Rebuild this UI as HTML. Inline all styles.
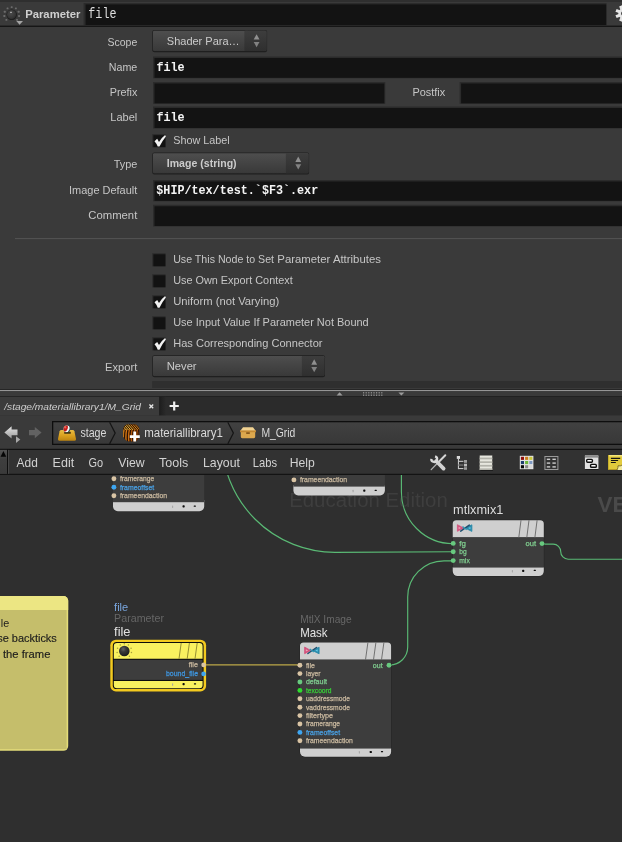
<!DOCTYPE html>
<html><head><meta charset="utf-8"><title>Houdini</title>
<style>
html,body{margin:0;padding:0;background:#3a3a3a;overflow:hidden;width:622px;height:842px}
svg{display:block;position:absolute;left:0;top:0;will-change:transform}
text{font-family:"Liberation Sans",sans-serif;white-space:pre}
.m{font-family:"Liberation Mono",monospace}
.mb{font-family:"Liberation Mono",monospace;font-weight:bold}
</style></head><body>
<svg width="622" height="842" viewBox="0 0 622 842">
<defs>
<linearGradient id="btn" x1="0" y1="0" x2="0" y2="1"><stop offset="0" stop-color="#4e4e4e"/><stop offset="1" stop-color="#393939"/></linearGradient>
<linearGradient id="btn2" x1="0" y1="0" x2="0" y2="1"><stop offset="0" stop-color="#3d3d3d"/><stop offset="1" stop-color="#2f2f2f"/></linearGradient>
<linearGradient id="pbox" x1="0" y1="0" x2="0" y2="1"><stop offset="0" stop-color="#414141"/><stop offset="1" stop-color="#383838"/></linearGradient>
<linearGradient id="strip" x1="0" y1="0" x2="0" y2="1"><stop offset="0" stop-color="#545454"/><stop offset="0.4" stop-color="#3e3e3e"/><stop offset="1" stop-color="#3a3a3a"/></linearGradient>
<linearGradient id="arr" x1="0" y1="0" x2="0" y2="1"><stop offset="0" stop-color="#e6e6e6"/><stop offset="1" stop-color="#9c9c9c"/></linearGradient>
<radialGradient id="knob" cx="0.42" cy="0.38" r="0.7"><stop offset="0" stop-color="#4a4a4a"/><stop offset="0.7" stop-color="#363636"/><stop offset="1" stop-color="#262626"/></radialGradient>
<radialGradient id="knob2" cx="0.4" cy="0.32" r="0.75"><stop offset="0" stop-color="#666"/><stop offset="0.35" stop-color="#3a3a3a"/><stop offset="1" stop-color="#181818"/></radialGradient>
<g id="mtlx">
<path d="M0.3 0.8 L0.3 7.4 L6.4 4.1 Z" fill="#d2527c" stroke="#d2527c" stroke-width="0.8" stroke-linejoin="round"/>
<path d="M1.5 2.9 L1.5 5.3 L3.9 4.1 Z" fill="#eea0b8"/>
<path d="M14.8 0.9 L14.8 7.5 L8 4.2 Z" fill="#2a8aaa" stroke="#2a8aaa" stroke-width="0.8" stroke-linejoin="round"/>
<path d="M13.4 3 L13.4 5.4 L11 4.2 Z" fill="#62c8e6"/>
<path d="M3.6 7.2 L12.2 1.2" stroke="#1f5070" stroke-width="1.5" stroke-linecap="round" fill="none"/>
<path d="M5.4 2.6 L9.6 5.8" stroke="#2f96b4" stroke-width="1.2" fill="none"/>
</g>
</defs>

<rect x="0" y="0" width="622" height="842" fill="#3a3a3a"/>
<rect x="0" y="0" width="622" height="2" fill="#2f2f2f"/>
<g>
<rect x="5.45" y="18.95" width="1.9" height="1.9" rx="0.5" fill="#6c6c6c"/>
<rect x="3.39" y="15.11" width="1.9" height="1.9" rx="0.5" fill="#6c6c6c"/>
<rect x="3.82" y="10.78" width="1.9" height="1.9" rx="0.5" fill="#6c6c6c"/>
<rect x="6.58" y="7.41" width="1.9" height="1.9" rx="0.5" fill="#6c6c6c"/>
<rect x="10.75" y="6.15" width="1.9" height="1.9" rx="0.5" fill="#6c6c6c"/>
<rect x="14.92" y="7.41" width="1.9" height="1.9" rx="0.5" fill="#6c6c6c"/>
<rect x="17.68" y="10.78" width="1.9" height="1.9" rx="0.5" fill="#6c6c6c"/>
<rect x="18.11" y="15.11" width="1.9" height="1.9" rx="0.5" fill="#6c6c6c"/>
<rect x="16.05" y="18.95" width="1.9" height="1.9" rx="0.5" fill="#6c6c6c"/>
<circle cx="11.7" cy="14.7" r="5.2" fill="#1c1c1c"/><circle cx="11.6" cy="14.6" r="4.6" fill="url(#knob)"/>
<rect x="10.1" y="11.8" width="1.8" height="1" rx="0.4" fill="#d8d8d8"/>
<path d="M16.3 21 H23 L19.6 24.8 Z" fill="#a4a4a4"/>
</g>
<text x="25.2" y="18" font-size="11" fill="#cfcfcf" textLength="55.2" lengthAdjust="spacingAndGlyphs" font-weight="bold">Parameter</text>
<rect x="83.6" y="3" width="523" height="22.3" fill="#2b2b2b"/>
<rect x="85.6" y="4.4" width="520.6" height="20.6" fill="#131313"/>
<text x="88.3" y="17.7" font-size="14" fill="#dedede" class="m" textLength="28.2" lengthAdjust="spacingAndGlyphs">file</text>
<g transform="translate(623.7,13.5)" fill="#e6e6e6">
<rect x="-1.5" y="-8.3" width="3" height="5" transform="rotate(22.5)"/>
<rect x="-1.5" y="-8.3" width="3" height="5" transform="rotate(67.5)"/>
<rect x="-1.5" y="-8.3" width="3" height="5" transform="rotate(112.5)"/>
<rect x="-1.5" y="-8.3" width="3" height="5" transform="rotate(157.5)"/>
<rect x="-1.5" y="-8.3" width="3" height="5" transform="rotate(202.5)"/>
<rect x="-1.5" y="-8.3" width="3" height="5" transform="rotate(247.5)"/>
<rect x="-1.5" y="-8.3" width="3" height="5" transform="rotate(292.5)"/>
<rect x="-1.5" y="-8.3" width="3" height="5" transform="rotate(337.5)"/>
<circle r="4.0" fill="none" stroke="#e6e6e6" stroke-width="2.8"/>
</g>
<rect x="0" y="25.6" width="622" height="1.4" fill="#161616"/>
<text x="137.3" y="46" font-size="10.8" fill="#c6c6c6" textLength="29.8" lengthAdjust="spacingAndGlyphs" text-anchor="end">Scope</text>
<rect x="152.3" y="30.1" width="114.80000000000001" height="22.099999999999998" fill="#1f1f1f" rx="2"/>
<rect x="153" y="30.8" width="113.4" height="20.2" fill="url(#btn)" rx="1.2"/>
<rect x="244.6" y="30.8" width="21.799999999999983" height="20.2" fill="url(#btn2)" rx="1.2"/>
<rect x="244.6" y="30.8" width="3" height="20.2" fill="url(#btn2)"/>
<path d="M253.70 39.60 L256.60 34.20 L259.50 39.60 Z" fill="#909090"/>
<path d="M253.70 41.90 L256.60 47.20 L259.50 41.90 Z" fill="#828282"/>
<text x="166.8" y="44.699999999999996" font-size="10.8" fill="#cbcbcb" textLength="72.8" lengthAdjust="spacingAndGlyphs">Shader Para…</text>
<text x="137.3" y="71" font-size="10.8" fill="#c6c6c6" textLength="28.5" lengthAdjust="spacingAndGlyphs" text-anchor="end">Name</text>
<rect x="153" y="56.5" width="469" height="21.799999999999997" fill="#2b2b2b"/>
<rect x="154.5" y="58.0" width="467.5" height="19.799999999999997" fill="#131313"/>
<text x="156.4" y="70.7" font-size="12.5" fill="#f4f4f4" class="mb" textLength="28.16" lengthAdjust="spacingAndGlyphs">file</text>
<text x="137.3" y="96" font-size="10.8" fill="#c6c6c6" textLength="27.6" lengthAdjust="spacingAndGlyphs" text-anchor="end">Prefix</text>
<rect x="153" y="82" width="232.3" height="21.799999999999997" fill="#2b2b2b"/>
<rect x="154.5" y="83.5" width="229.8" height="19.799999999999997" fill="#131313"/>
<text x="412.4" y="96" font-size="10.8" fill="#c6c6c6" textLength="32.8" lengthAdjust="spacingAndGlyphs">Postfix</text>
<rect x="459.6" y="82" width="162.39999999999998" height="21.799999999999997" fill="#2b2b2b"/>
<rect x="461.1" y="83.5" width="160.89999999999998" height="19.799999999999997" fill="#131313"/>
<text x="137.3" y="121" font-size="10.8" fill="#c6c6c6" textLength="27" lengthAdjust="spacingAndGlyphs" text-anchor="end">Label</text>
<rect x="153" y="106.5" width="469" height="22.0" fill="#2b2b2b"/>
<rect x="154.5" y="108.0" width="467.5" height="20.0" fill="#131313"/>
<text x="156.4" y="120.9" font-size="12.5" fill="#f4f4f4" class="mb" textLength="28.16" lengthAdjust="spacingAndGlyphs">file</text>
<rect x="152.2" y="134.1" width="13.4" height="13.2" fill="#2c2c2c"/>
<rect x="153.39999999999998" y="135.2" width="12.0" height="11.9" fill="#121212"/>
<path transform="translate(152.5,134.0)" d="M2.0 7.2 L4.7 4.8 L6.5 7.9 Q9.2 3.4 12.6 0.9 L13.4 2.5 Q9.8 6.8 7.0 12.6 L5.2 12.6 Q4.2 9.6 2.0 7.2 Z" fill="#f2f2f2"/>
<text x="173.2" y="144" font-size="10.8" fill="#c6c6c6" textLength="56.5" lengthAdjust="spacingAndGlyphs">Show Label</text>
<text x="137.3" y="168" font-size="10.8" fill="#c6c6c6" textLength="23.6" lengthAdjust="spacingAndGlyphs" text-anchor="end">Type</text>
<rect x="152.3" y="152.5" width="156.8" height="21.9" fill="#1f1f1f" rx="2"/>
<rect x="153" y="153.2" width="155.4" height="20" fill="url(#btn)" rx="1.2"/>
<rect x="285.9" y="153.2" width="22.5" height="20" fill="url(#btn2)" rx="1.2"/>
<rect x="285.9" y="153.2" width="3" height="20" fill="url(#btn2)"/>
<path d="M295.35 161.90 L298.25 156.50 L301.15 161.90 Z" fill="#909090"/>
<path d="M295.35 164.20 L298.25 169.50 L301.15 164.20 Z" fill="#828282"/>
<text x="166.8" y="167.0" font-size="10.8" fill="#cbcbcb" textLength="69.8" lengthAdjust="spacingAndGlyphs" font-weight="bold">Image (string)</text>
<text x="137.3" y="194" font-size="10.8" fill="#c6c6c6" textLength="68.3" lengthAdjust="spacingAndGlyphs" text-anchor="end">Image Default</text>
<rect x="153" y="180" width="469" height="21.30000000000001" fill="#2b2b2b"/>
<rect x="154.5" y="181.5" width="467.5" height="19.30000000000001" fill="#131313"/>
<text x="156.3" y="194.1" font-size="12.5" fill="#f4f4f4" class="mb" textLength="161.9" lengthAdjust="spacingAndGlyphs">$HIP/tex/test.`$F3`.exr</text>
<text x="137.3" y="219" font-size="10.8" fill="#c6c6c6" textLength="49" lengthAdjust="spacingAndGlyphs" text-anchor="end">Comment</text>
<rect x="153" y="204.8" width="469" height="21.69999999999999" fill="#2b2b2b"/>
<rect x="154.5" y="206.3" width="467.5" height="19.69999999999999" fill="#131313"/>
<rect x="15" y="238.1" width="607" height="1" fill="#555555"/>
<rect x="152.2" y="253.2" width="13.4" height="13.2" fill="#2c2c2c"/>
<rect x="153.39999999999998" y="254.29999999999998" width="12.0" height="11.9" fill="#121212"/>
<text x="173.2" y="263.0" font-size="10.8" fill="#c6c6c6" textLength="100.9" lengthAdjust="spacingAndGlyphs">Use This Node to Set</text>
<text x="277.3" y="263.0" font-size="10.8" fill="#c6c6c6" textLength="103.6" lengthAdjust="spacingAndGlyphs">Parameter Attributes</text>
<rect x="152.2" y="274.2" width="13.4" height="13.2" fill="#2c2c2c"/>
<rect x="153.39999999999998" y="275.3" width="12.0" height="11.9" fill="#121212"/>
<text x="173.2" y="284.0" font-size="10.8" fill="#c6c6c6" textLength="119.5" lengthAdjust="spacingAndGlyphs">Use Own Export Context</text>
<rect x="152.2" y="295.2" width="13.4" height="13.2" fill="#2c2c2c"/>
<rect x="153.39999999999998" y="296.3" width="12.0" height="11.9" fill="#121212"/>
<path transform="translate(152.5,295.09999999999997)" d="M2.0 7.2 L4.7 4.8 L6.5 7.9 Q9.2 3.4 12.6 0.9 L13.4 2.5 Q9.8 6.8 7.0 12.6 L5.2 12.6 Q4.2 9.6 2.0 7.2 Z" fill="#f2f2f2"/>
<text x="173.2" y="305.0" font-size="10.8" fill="#c6c6c6" textLength="106" lengthAdjust="spacingAndGlyphs">Uniform (not Varying)</text>
<rect x="152.2" y="316.2" width="13.4" height="13.2" fill="#2c2c2c"/>
<rect x="153.39999999999998" y="317.3" width="12.0" height="11.9" fill="#121212"/>
<text x="173.2" y="326.0" font-size="10.8" fill="#c6c6c6" textLength="195.5" lengthAdjust="spacingAndGlyphs">Use Input Value If Parameter Not Bound</text>
<rect x="152.2" y="337.2" width="13.4" height="13.2" fill="#2c2c2c"/>
<rect x="153.39999999999998" y="338.3" width="12.0" height="11.9" fill="#121212"/>
<path transform="translate(152.5,337.09999999999997)" d="M2.0 7.2 L4.7 4.8 L6.5 7.9 Q9.2 3.4 12.6 0.9 L13.4 2.5 Q9.8 6.8 7.0 12.6 L5.2 12.6 Q4.2 9.6 2.0 7.2 Z" fill="#f2f2f2"/>
<text x="173.2" y="347.0" font-size="10.8" fill="#c6c6c6" textLength="149.3" lengthAdjust="spacingAndGlyphs">Has Corresponding Connector</text>
<text x="137.3" y="371.2" font-size="10.8" fill="#c6c6c6" textLength="32.2" lengthAdjust="spacingAndGlyphs" text-anchor="end">Export</text>
<rect x="152.3" y="355.3" width="172.70000000000002" height="21.9" fill="#1f1f1f" rx="2"/>
<rect x="153" y="356" width="171.3" height="20" fill="url(#btn)" rx="1.2"/>
<rect x="301.9" y="356" width="22.400000000000034" height="20" fill="url(#btn2)" rx="1.2"/>
<rect x="301.9" y="356" width="3" height="20" fill="url(#btn2)"/>
<path d="M311.30 364.70 L314.20 359.30 L317.10 364.70 Z" fill="#909090"/>
<path d="M311.30 367.00 L314.20 372.30 L317.10 367.00 Z" fill="#828282"/>
<text x="166.8" y="369.8" font-size="10.8" fill="#cbcbcb" textLength="29.8" lengthAdjust="spacingAndGlyphs">Never</text>
<rect x="152.2" y="381.1" width="470" height="6.9" fill="#2f2f2f"/>
<rect x="0" y="389" width="622" height="1" fill="#262626"/>
<rect x="0" y="390" width="622" height="1.2" fill="#959595"/>
<rect x="0" y="391.2" width="622" height="5.3" fill="#3a3a3a"/>
<path d="M336.6 395.5 L339.6 392.3 L342.6 395.5 Z M398.4 392.4 L404.4 392.4 L401.4 395.6 Z" fill="#9a9a9a"/>
<rect x="363.0" y="392.2" width="1.2" height="1.2" fill="#9a9a9a"/>
<rect x="365.6" y="392.2" width="1.2" height="1.2" fill="#9a9a9a"/>
<rect x="368.2" y="392.2" width="1.2" height="1.2" fill="#9a9a9a"/>
<rect x="370.8" y="392.2" width="1.2" height="1.2" fill="#9a9a9a"/>
<rect x="373.4" y="392.2" width="1.2" height="1.2" fill="#9a9a9a"/>
<rect x="376.0" y="392.2" width="1.2" height="1.2" fill="#9a9a9a"/>
<rect x="378.6" y="392.2" width="1.2" height="1.2" fill="#9a9a9a"/>
<rect x="381.2" y="392.2" width="1.2" height="1.2" fill="#9a9a9a"/>
<rect x="363.0" y="394.59999999999997" width="1.2" height="1.2" fill="#9a9a9a"/>
<rect x="365.6" y="394.59999999999997" width="1.2" height="1.2" fill="#9a9a9a"/>
<rect x="368.2" y="394.59999999999997" width="1.2" height="1.2" fill="#9a9a9a"/>
<rect x="370.8" y="394.59999999999997" width="1.2" height="1.2" fill="#9a9a9a"/>
<rect x="373.4" y="394.59999999999997" width="1.2" height="1.2" fill="#9a9a9a"/>
<rect x="376.0" y="394.59999999999997" width="1.2" height="1.2" fill="#9a9a9a"/>
<rect x="378.6" y="394.59999999999997" width="1.2" height="1.2" fill="#9a9a9a"/>
<rect x="381.2" y="394.59999999999997" width="1.2" height="1.2" fill="#9a9a9a"/>
<rect x="0" y="396.3" width="622" height="0.9" fill="#161616"/>
<rect x="0" y="396.8" width="622" height="18.9" fill="#2b2b2b"/>
<linearGradient id="tsh" x1="0" y1="0" x2="1" y2="0"><stop offset="0" stop-color="#1c1c1c"/><stop offset="1" stop-color="#2b2b2b"/></linearGradient>
<rect x="159" y="396.8" width="7" height="18.8" fill="url(#tsh)"/>
<rect x="0" y="396.8" width="159.1" height="18.8" fill="#3b3b3b"/>
<text x="4.2" y="410" font-size="9.6" fill="#cfcfcf" textLength="136.8" lengthAdjust="spacingAndGlyphs" font-style="italic">/stage/materiallibrary1/M_Grid</text>
<path d="M149.4 404.5 L153.2 408.3 M153.2 404.5 L149.4 408.3" stroke="#e4e4e4" stroke-width="1.35"/>
<path d="M169.6 406 H178.8 M174.2 401.4 V410.6" stroke="#f0f0f0" stroke-width="2.2"/>
<rect x="0" y="415.6" width="622" height="33" fill="#3a3a3a"/>
<path d="M4.4 432.5 L11.6 426.2 V429.5 H17.5 V435.3 H11.6 V438.6 Z" fill="url(#arr)"/>
<path d="M16 436.2 L20.3 439.6 L16 443 Z" fill="#a8a8a8"/>
<path d="M41.6 432.6 L34.8 426.9 V430 H29 V435.2 H34.8 V438.3 Z" fill="#626262"/>
<rect x="52" y="421" width="572" height="24" fill="#0e0e0e"/>
<rect x="53.3" y="422.3" width="571" height="21.4" fill="url(#pbox)"/>
<path d="M109.6 422.3 L115.19999999999999 433.1 L109.6 443.9" fill="none" stroke="#151515" stroke-width="1.2"/>
<path d="M227.8 422.3 L233.4 433.1 L227.8 443.9" fill="none" stroke="#151515" stroke-width="1.2"/>
<linearGradient id="tray" x1="0" y1="0" x2="0" y2="1"><stop offset="0" stop-color="#e8bc44"/><stop offset="0.5" stop-color="#dba220"/><stop offset="1" stop-color="#bc8410"/></linearGradient>
<clipPath id="ballc"><circle cx="66.9" cy="428.9" r="3.35"/></clipPath>
<g><path d="M61.4 430 H72.6 Q74 430 74.4 431.3 L76 439 Q76.3 440.8 74.6 440.8 H59.4 Q57.7 440.8 58 439 L59.6 431.3 Q60 430 61.4 430 Z" fill="url(#tray)"/><rect x="64.2" y="431.8" width="6.6" height="2" rx="0.6" fill="#46340c"/><g clip-path="url(#ballc)"><rect x="62" y="424" width="10" height="10" fill="#2a5656"/><ellipse cx="66.1" cy="428.6" rx="3.3" ry="3.9" fill="#f4f4f4" transform="rotate(20 66.1 428.6)"/><ellipse cx="65" cy="428.2" rx="2.7" ry="3.7" fill="#c81a1a" transform="rotate(20 65 428.2)"/><ellipse cx="65.2" cy="427.2" rx="1" ry="1.2" fill="#e86a5a"/></g></g>
<text x="80.4" y="436.8" font-size="12" fill="#dadada" textLength="26" lengthAdjust="spacingAndGlyphs">stage</text>
<clipPath id="mlc"><path d="M126.6 424.6 L135.4 424.4 Q138.8 425.6 139.2 428.6 L139 437.4 Q137.6 440.6 135 441.6 L127.4 441.2 Q124 439.6 123.2 436.6 L123.2 428.6 Q124 425.6 126.6 424.6 Z"/></clipPath>
<g clip-path="url(#mlc)">
<rect x="122" y="423" width="19" height="20" fill="#2c1204"/>
<path d="M123.6 442 Q122.8 435 124.19999999999999 428.6" stroke="#e08a1c" stroke-width="1.35" fill="none"/>
<path d="M126.2 442 Q125.4 435 126.8 428.6" stroke="#d87a14" stroke-width="1.35" fill="none"/>
<path d="M128.9 442 Q128.1 435 129.5 428.6" stroke="#cc6c10" stroke-width="1.35" fill="none"/>
<path d="M131.6 442 Q130.79999999999998 435 132.2 428.6" stroke="#b85c0c" stroke-width="1.35" fill="none"/>
<path d="M134.3 442 Q133.5 435 134.9 428.6" stroke="#b85c0c" stroke-width="1.35" fill="none"/>
<path d="M137.0 442 Q136.2 435 137.6 428.6" stroke="#a8500a" stroke-width="1.35" fill="none"/>
<path d="M139.4 442 Q138.6 435 140.0 428.6" stroke="#96460a" stroke-width="1.35" fill="none"/>
<rect x="122" y="423" width="19" height="6.4" fill="#341604"/>
<path d="M120.6 423.6 L126.2 430" stroke="#f0c040" stroke-width="0.95" fill="none"/>
<path d="M122.9 423.6 L128.5 430" stroke="#f0c040" stroke-width="0.95" fill="none"/>
<path d="M125.2 423.6 L130.8 430" stroke="#f0c040" stroke-width="0.95" fill="none"/>
<path d="M127.5 423.6 L133.1 430" stroke="#f0c040" stroke-width="0.95" fill="none"/>
<path d="M129.8 423.6 L135.4 430" stroke="#d88a20" stroke-width="0.95" fill="none"/>
<path d="M132.1 423.6 L137.7 430" stroke="#d88a20" stroke-width="0.95" fill="none"/>
<path d="M134.4 423.6 L140.0 430" stroke="#d88a20" stroke-width="0.95" fill="none"/>
<path d="M136.7 423.6 L142.3 430" stroke="#d88a20" stroke-width="0.95" fill="none"/>
<path d="M139.0 423.6 L144.6 430" stroke="#d88a20" stroke-width="0.95" fill="none"/>
</g>
<path d="M129.8 436.6 H139.8 M134.7 431.6 V441.6" stroke="#ffffff" stroke-width="2.7"/>
<text x="144.2" y="436.8" font-size="12" fill="#dadada" textLength="78.6" lengthAdjust="spacingAndGlyphs">materiallibrary1</text>
<g><path d="M240 431.2 L243 427.3 H253 L256 431.2 Z" fill="#f0d292"/><path d="M240.8 431.2 H255.2 V436.8 a1.4 1.4 0 0 1 -1.4 1.4 H242.2 a1.4 1.4 0 0 1 -1.4 -1.4 Z" fill="#dca84e"/><rect x="240" y="430.4" width="16" height="1.8" fill="#c48a34"/><rect x="246.2" y="432.2" width="3.6" height="1.8" fill="#8a5a1c"/></g>
<text x="261.4" y="436.8" font-size="12" fill="#dadada" textLength="34" lengthAdjust="spacingAndGlyphs">M_Grid</text>
<rect x="0" y="448.8" width="622" height="26.1" fill="#0e0e0e"/>
<rect x="0" y="449.9" width="622" height="23.9" fill="#323232"/>
<rect x="0" y="449.9" width="7.0" height="23.9" fill="url(#strip)"/>
<rect x="7.0" y="449.9" width="1.1" height="23.9" fill="#0e0e0e"/>
<rect x="8.1" y="449.9" width="1" height="23.9" fill="#4a4a4a"/>
<path d="M0.6 456.7 L3.4 451 L6.2 456.7 Z" fill="#050505"/>
<text x="16.6" y="466.6" font-size="12.4" fill="#d2d2d2" textLength="21.2" lengthAdjust="spacingAndGlyphs">Add</text>
<text x="52.6" y="466.6" font-size="12.4" fill="#d2d2d2" textLength="21.6" lengthAdjust="spacingAndGlyphs">Edit</text>
<text x="88.6" y="466.6" font-size="12.4" fill="#d2d2d2" textLength="14.6" lengthAdjust="spacingAndGlyphs">Go</text>
<text x="118.2" y="466.6" font-size="12.4" fill="#d2d2d2" textLength="26.4" lengthAdjust="spacingAndGlyphs">View</text>
<text x="159" y="466.6" font-size="12.4" fill="#d2d2d2" textLength="29.2" lengthAdjust="spacingAndGlyphs">Tools</text>
<text x="203" y="466.6" font-size="12.4" fill="#d2d2d2" textLength="37" lengthAdjust="spacingAndGlyphs">Layout</text>
<text x="252.8" y="466.6" font-size="12.4" fill="#d2d2d2" textLength="24.2" lengthAdjust="spacingAndGlyphs">Labs</text>
<text x="289.8" y="466.6" font-size="12.4" fill="#d2d2d2" textLength="25" lengthAdjust="spacingAndGlyphs">Help</text>
<g><path d="M445.3 455.3 L438.4 462.2" stroke="#d4d4d4" stroke-width="2" stroke-linecap="round"/><path d="M438.6 462 L431.2 469.6" stroke="#b4b4b4" stroke-width="1.3" stroke-linecap="round"/><path d="M436.2 461 L443.6 468.6" stroke="#d2d2d2" stroke-width="3.8" stroke-linecap="round"/><path d="M431.3 458.9 A2.9 2.9 0 1 0 435.1 456.3" fill="none" stroke="#dadada" stroke-width="2.3"/></g>
<g><rect x="456.8" y="456" width="3.2" height="2.9" fill="#dadada"/><rect x="457.9" y="458.9" width="1.1" height="10.2" fill="#c6c6c6"/><rect x="458" y="460.8" width="5.4" height="1.1" fill="#c6c6c6"/><rect x="458" y="464.5" width="5.4" height="1.1" fill="#808080"/><rect x="458" y="468" width="5.4" height="1.1" fill="#c6c6c6"/><rect x="464" y="460" width="3" height="2.8" fill="#9c9c9c"/><rect x="464" y="463.7" width="3" height="2.8" fill="#bcbcbc"/><rect x="464" y="467.2" width="3" height="2.6" fill="#9c9c9c"/></g>
<g><rect x="480.4" y="456.2" width="12.6" height="14.6" fill="#1c1c1c"/><rect x="479.7" y="455.5" width="12.6" height="14.5" fill="#e6e6de"/><rect x="479.7" y="457.6" width="12.6" height="1.7" fill="#b2b2aa"/><rect x="479.7" y="461.3" width="12.6" height="1.7" fill="#b2b2aa"/><rect x="479.7" y="464.9" width="12.6" height="1.7" fill="#b2b2aa"/><rect x="479.7" y="468.4" width="12.6" height="1.6" fill="#b2b2aa"/></g>
<g transform="translate(519.8,455.8)"><rect x="0" y="0" width="13.6" height="13.4" fill="#e4e4e4"/>
<rect x="1.1" y="1.0" width="3.1" height="3.1" fill="#90100e"/>
<rect x="5.300000000000001" y="1.0" width="3.1" height="3.1" fill="#cc7c1a"/>
<rect x="9.5" y="1.0" width="3.1" height="3.1" fill="#c8c63a"/>
<rect x="1.1" y="5.2" width="3.1" height="3.1" fill="#1e3e70"/>
<rect x="5.300000000000001" y="5.2" width="3.1" height="3.1" fill="#6ab63a"/>
<rect x="9.5" y="5.2" width="3.1" height="3.1" fill="#7c98c2"/>
<rect x="1.1" y="9.4" width="3.1" height="3.1" fill="#080808"/>
<rect x="5.300000000000001" y="9.4" width="3.1" height="3.1" fill="#888888"/>
<rect x="9.5" y="9.4" width="3.1" height="3.1" fill="#d8d8d8"/>
</g>
<g transform="translate(544.4,456)"><rect x="0.5" y="0.5" width="13" height="13" fill="#333" stroke="#9a9a9a" stroke-width="1"/><rect x="2.4" y="2.6" width="3.4" height="1.4" fill="#ccc"/><rect x="8" y="2.6" width="3.4" height="1.4" fill="#ccc"/><rect x="2.4" y="6.4" width="3.4" height="1.4" fill="#ccc"/><rect x="8" y="6.4" width="3.4" height="1.4" fill="#ccc"/><rect x="2.4" y="10.2" width="3.4" height="1.4" fill="#ccc"/><rect x="8" y="10.2" width="3.4" height="1.4" fill="#ccc"/></g>
<g><rect x="585.4" y="469" width="13" height="1" fill="#1e1e1e"/><rect x="584.9" y="455.7" width="13.5" height="13.3" fill="#e0e0e0"/><rect x="584.9" y="455.7" width="13.5" height="0.8" fill="#f6f6f6"/><rect x="584.9" y="456.5" width="13.5" height="0.8" fill="#2a2a2a"/><rect x="586.7" y="459.4" width="5.7" height="2.8" rx="0.9" fill="#fafafa" stroke="#0c0c0c" stroke-width="1.4"/><rect x="590.6" y="464.4" width="5.7" height="2.9" rx="0.9" fill="#fafafa" stroke="#0c0c0c" stroke-width="1.4"/></g>
<g><path d="M608 455 H623 V470 H608 Z" fill="#e2cb3c"/><path d="M608 455 H623 V456.4 H608 Z" fill="#f2e47a"/><path d="M608 455 V470 H609 V455 Z" fill="#c8b02c"/><path d="M608 469 H617 L618 470 H608 Z" fill="#b89c24"/><path d="M617 470 Q618.4 467.4 618 465.8 Q620 466.6 623 464.6 V470 Z" fill="#f3eba0"/><path d="M617 470 Q618.4 467.4 618 465.8 Q620 466.6 623 464.6" fill="none" stroke="#5a4c14" stroke-width="0.7"/><path d="M610.9 458.4 H620.2 M610.9 460.5 H618.1 M610.9 462.5 H615.8" stroke="#141414" stroke-width="1.1"/></g>
<rect x="0" y="474.9" width="622" height="368" fill="#2f2f2f"/>
<clipPath id="nc"><rect x="0" y="474.9" width="622" height="368"/></clipPath>
<g clip-path="url(#nc)">
<text x="289.2" y="506.6" font-size="20" fill="#3e3e3e" textLength="158.6" lengthAdjust="spacingAndGlyphs">Education Edition</text>
<text x="597.6" y="512.4" font-size="22.4" fill="#4a4a4a" font-weight="bold">VEX</text>
<path d="M222 439.4 A113 113 0 0 0 335 552.3 L453 551.7" fill="none" stroke="#5aba75" stroke-width="1.15"/>
<path d="M401.4 470 V491.9 A51.8 51.8 0 0 0 453.2 543.7" fill="none" stroke="#5aba75" stroke-width="1.15"/>
<path d="M389 665 H389.8 A17.9 17.9 0 0 0 407.7 647.1 V597.1 A36.3 36.3 0 0 1 444 560.8 H453" fill="none" stroke="#5aba75" stroke-width="1.15"/>
<path d="M542 544.1 H553.2 A7.5 7.5 0 0 1 560.7 551.6 A7.5 7.5 0 0 0 568.2 559.2 H622" fill="none" stroke="#5aba75" stroke-width="1.15"/>
<path d="M204 664.9 H300" fill="none" stroke="#bda848" stroke-width="1.2"/>
<path d="M113 500 H204.2 V506.4 a4.8 4.8 0 0 1 -4.8 4.8 H117.8 a4.8 4.8 0 0 1 -4.8 -4.8 Z" fill="#cfcfcf"/>
<rect x="113" y="474" width="91.2" height="28.2" fill="#3d3d3d"/>
<circle cx="113.9" cy="478.7" r="2.45" fill="#d9c4a4"/>
<text x="119.9" y="481.0" font-size="8.1" fill="#cdbca2" textLength="34.4" lengthAdjust="spacingAndGlyphs" stroke="#cdbca2" stroke-width="0.25">framerange</text>
<circle cx="113.9" cy="487.2" r="2.45" fill="#3ea6f2"/>
<text x="119.9" y="489.5" font-size="8.1" fill="#49a2e6" textLength="34.4" lengthAdjust="spacingAndGlyphs" stroke="#49a2e6" stroke-width="0.25">frameoffset</text>
<circle cx="113.9" cy="495.7" r="2.45" fill="#d9c4a4"/>
<text x="119.9" y="498.0" font-size="8.1" fill="#cdbca2" textLength="47.2" lengthAdjust="spacingAndGlyphs" stroke="#cdbca2" stroke-width="0.25">frameendaction</text>
<rect x="172.05" y="505.50" width="1.1" height="2.5" rx="0.4" fill="#a6a6a6"/>
<rect x="182.50" y="505.30" width="2.2" height="2.2" rx="0.7" fill="#0c0c0c"/>
<rect x="193.70" y="505.40" width="2.2" height="1.3" rx="0.5" fill="#0c0c0c"/>
<path d="M293.4 485 H384.9 V490.6 a4.8 4.8 0 0 1 -4.8 4.8 H298.2 a4.8 4.8 0 0 1 -4.8 -4.8 Z" fill="#cfcfcf"/>
<rect x="293.4" y="474" width="91.5" height="12.6" fill="#3d3d3d"/>
<circle cx="293.9" cy="479.9" r="2.45" fill="#d9c4a4"/>
<text x="299.9" y="482.2" font-size="8.1" fill="#cdbca2" textLength="47.2" lengthAdjust="spacingAndGlyphs" stroke="#cdbca2" stroke-width="0.25">frameendaction</text>
<rect x="352.55" y="489.80" width="1.1" height="2.5" rx="0.4" fill="#a6a6a6"/>
<rect x="363.20" y="489.60" width="2.2" height="2.2" rx="0.7" fill="#0c0c0c"/>
<rect x="374.60" y="489.70" width="2.2" height="1.3" rx="0.5" fill="#0c0c0c"/>
<text x="453" y="513.6" font-size="12.2" fill="#dcdcdc" textLength="50.4" lengthAdjust="spacingAndGlyphs">mtlxmix1</text>
<path d="M456.2 520.2 H540.3 a3.5 3.5 0 0 1 3.5 3.5 V571.1 a5 5 0 0 1 -5 5 H457.7 a5 5 0 0 1 -5 -5 V523.7 a3.5 3.5 0 0 1 3.5 -3.5 Z" fill="none" stroke="#242424" stroke-width="1"/>
<path d="M456.2 520.2 H540.3 a3.5 3.5 0 0 1 3.5 3.5 V537.4000000000001 H452.7 V523.7 a3.5 3.5 0 0 1 3.5 -3.5 Z" fill="#cfcfcf"/>
<path d="M452.7 567.2 H543.8 V571.1 a5 5 0 0 1 -5 5 H457.7 a5 5 0 0 1 -5 -5 Z" fill="#cfcfcf"/>
<rect x="452.7" y="537.2" width="91.1" height="30.199999999999953" fill="#3d3d3d"/>
<path d="M521 520.2 L518.8 537.4" stroke="#666666" stroke-width="0.9"/>
<path d="M529 520.2 L526.8 537.4" stroke="#666666" stroke-width="0.9"/>
<path d="M537.1 520.2 L534.9 537.4" stroke="#666666" stroke-width="0.9"/>
<use href="#mtlx" transform="translate(457.1,523.9)"/>
<circle cx="453.2" cy="543.4" r="2.45" fill="#68c97f"/>
<text x="459.2" y="545.6999999999999" font-size="8.1" fill="#80cf90" textLength="6.6" lengthAdjust="spacingAndGlyphs" stroke="#80cf90" stroke-width="0.25">fg</text>
<circle cx="453.2" cy="551.8" r="2.45" fill="#68c97f"/>
<text x="459.2" y="554.0999999999999" font-size="8.1" fill="#80cf90" textLength="7.4" lengthAdjust="spacingAndGlyphs" stroke="#80cf90" stroke-width="0.25">bg</text>
<circle cx="453.2" cy="560.6" r="2.45" fill="#68c97f"/>
<text x="459.2" y="562.9" font-size="8.1" fill="#80cf90" textLength="10.6" lengthAdjust="spacingAndGlyphs" stroke="#80cf90" stroke-width="0.25">mix</text>
<text x="525.6" y="546" font-size="8.1" fill="#80cf90" textLength="10.6" lengthAdjust="spacingAndGlyphs" stroke="#80cf90" stroke-width="0.25">out</text>
<circle cx="542" cy="543.6" r="2.45" fill="#68c97f"/>
<rect x="511.85" y="569.90" width="1.1" height="2.5" rx="0.4" fill="#a6a6a6"/>
<rect x="522.10" y="569.70" width="2.2" height="2.2" rx="0.7" fill="#0c0c0c"/>
<rect x="533.70" y="569.80" width="2.2" height="1.3" rx="0.5" fill="#0c0c0c"/>
<text x="300.2" y="622.8" font-size="11.6" fill="#676767" textLength="51.4" lengthAdjust="spacingAndGlyphs">MtlX Image</text>
<text x="300.2" y="636.8" font-size="12.8" fill="#e4e4e4" textLength="27.4" lengthAdjust="spacingAndGlyphs">Mask</text>
<path d="M303.5 642.6 H387.6 a3.5 3.5 0 0 1 3.5 3.5 V751.8000000000001 a5 5 0 0 1 -5 5 H305 a5 5 0 0 1 -5 -5 V646.1 a3.5 3.5 0 0 1 3.5 -3.5 Z" fill="none" stroke="#242424" stroke-width="1"/>
<path d="M303.5 642.6 H387.6 a3.5 3.5 0 0 1 3.5 3.5 V659.8000000000001 H300 V646.1 a3.5 3.5 0 0 1 3.5 -3.5 Z" fill="#cfcfcf"/>
<path d="M300 748.2 H391.1 V751.8000000000001 a5 5 0 0 1 -5 5 H305 a5 5 0 0 1 -5 -5 Z" fill="#cfcfcf"/>
<rect x="300" y="659.6" width="91.1" height="88.79999999999998" fill="#3d3d3d"/>
<path d="M367.9 642.6 L365.5 659.8" stroke="#666666" stroke-width="0.9"/>
<path d="M375.9 642.6 L373.5 659.8" stroke="#666666" stroke-width="0.9"/>
<path d="M383.9 642.6 L381.5 659.8" stroke="#666666" stroke-width="0.9"/>
<use href="#mtlx" transform="translate(304.3,646.3)"/>
<circle cx="299.9" cy="665.2" r="2.45" fill="#d9c4a4"/>
<text x="305.9" y="667.5" font-size="8.1" fill="#cdbca2" textLength="9" lengthAdjust="spacingAndGlyphs" stroke="#cdbca2" stroke-width="0.25">file</text>
<circle cx="299.9" cy="673.6" r="2.45" fill="#d9c4a4"/>
<text x="305.9" y="675.9" font-size="8.1" fill="#cdbca2" textLength="14.6" lengthAdjust="spacingAndGlyphs" stroke="#cdbca2" stroke-width="0.25">layer</text>
<circle cx="299.9" cy="682.0" r="2.45" fill="#68c97f"/>
<text x="305.9" y="684.3" font-size="8.1" fill="#80cf90" textLength="21" lengthAdjust="spacingAndGlyphs" stroke="#80cf90" stroke-width="0.25">default</text>
<circle cx="299.9" cy="690.4000000000001" r="2.45" fill="#2edb2e"/>
<text x="305.9" y="692.7" font-size="8.1" fill="#38d238" textLength="25.6" lengthAdjust="spacingAndGlyphs" stroke="#38d238" stroke-width="0.25">texcoord</text>
<circle cx="299.9" cy="698.8000000000001" r="2.45" fill="#d9c4a4"/>
<text x="305.9" y="701.1" font-size="8.1" fill="#cdbca2" textLength="44" lengthAdjust="spacingAndGlyphs" stroke="#cdbca2" stroke-width="0.25">uaddressmode</text>
<circle cx="299.9" cy="707.2" r="2.45" fill="#d9c4a4"/>
<text x="305.9" y="709.5" font-size="8.1" fill="#cdbca2" textLength="44" lengthAdjust="spacingAndGlyphs" stroke="#cdbca2" stroke-width="0.25">vaddressmode</text>
<circle cx="299.9" cy="715.6" r="2.45" fill="#d9c4a4"/>
<text x="305.9" y="717.9" font-size="8.1" fill="#cdbca2" textLength="27.2" lengthAdjust="spacingAndGlyphs" stroke="#cdbca2" stroke-width="0.25">filtertype</text>
<circle cx="299.9" cy="724.0" r="2.45" fill="#d9c4a4"/>
<text x="305.9" y="726.3" font-size="8.1" fill="#cdbca2" textLength="34.2" lengthAdjust="spacingAndGlyphs" stroke="#cdbca2" stroke-width="0.25">framerange</text>
<circle cx="299.9" cy="732.4000000000001" r="2.45" fill="#3ea6f2"/>
<text x="305.9" y="734.7" font-size="8.1" fill="#49a2e6" textLength="34.2" lengthAdjust="spacingAndGlyphs" stroke="#49a2e6" stroke-width="0.25">frameoffset</text>
<circle cx="299.9" cy="740.8000000000001" r="2.45" fill="#d9c4a4"/>
<text x="305.9" y="743.1" font-size="8.1" fill="#cdbca2" textLength="47" lengthAdjust="spacingAndGlyphs" stroke="#cdbca2" stroke-width="0.25">frameendaction</text>
<text x="372.8" y="667.6" font-size="8.1" fill="#80cf90" textLength="9.8" lengthAdjust="spacingAndGlyphs" stroke="#80cf90" stroke-width="0.25">out</text>
<circle cx="389" cy="665.2" r="2.45" fill="#68c97f"/>
<rect x="358.85" y="751.10" width="1.1" height="2.5" rx="0.4" fill="#a6a6a6"/>
<rect x="369.70" y="750.90" width="2.2" height="2.2" rx="0.7" fill="#0c0c0c"/>
<rect x="380.90" y="751.00" width="2.2" height="1.3" rx="0.5" fill="#0c0c0c"/>
<text x="114.1" y="610.8" font-size="10.8" fill="#79a6df" textLength="14.1" lengthAdjust="spacingAndGlyphs">file</text>
<text x="114.1" y="621.8" font-size="11" fill="#666666" textLength="49.9" lengthAdjust="spacingAndGlyphs">Parameter</text>
<text x="114.1" y="635.8" font-size="12.8" fill="#e2e2e2" textLength="16.4" lengthAdjust="spacingAndGlyphs">file</text>
<rect x="110.3" y="639.7" width="95.8" height="51.8" rx="5.6" fill="#f3ca1f"/>
<rect x="112.8" y="642.1" width="90.8" height="47" rx="3.9" fill="#0c0c0c"/>
<path d="M113.8 658.8 V646.2 a3.2 3.2 0 0 1 3.2 -3.2 H199.4 a3.2 3.2 0 0 1 3.2 3.2 V658.8 Z" fill="#f9f15f"/>
<rect x="113.8" y="659.8" width="88.8" height="20.1" fill="#3d3d3d"/>
<path d="M113.8 681 H202.6 V685 a3.2 3.2 0 0 1 -3.2 3.2 H117 a3.2 3.2 0 0 1 -3.2 -3.2 Z" fill="#f9f15f"/>
<path d="M181.2 643 L179.0 658.8" stroke="#8a842c" stroke-width="0.9"/>
<path d="M189.4 643 L187.20000000000002 658.8" stroke="#8a842c" stroke-width="0.9"/>
<path d="M197.2 643 L195.0 658.8" stroke="#8a842c" stroke-width="0.9"/>
<circle cx="119.14" cy="656.16" r="0.75" fill="#a89e3a"/>
<circle cx="117.14" cy="652.42" r="0.75" fill="#a89e3a"/>
<circle cx="117.56" cy="648.21" r="0.75" fill="#a89e3a"/>
<circle cx="120.24" cy="644.93" r="0.75" fill="#a89e3a"/>
<circle cx="124.30" cy="643.70" r="0.75" fill="#a89e3a"/>
<circle cx="128.36" cy="644.93" r="0.75" fill="#a89e3a"/>
<circle cx="131.04" cy="648.21" r="0.75" fill="#a89e3a"/>
<circle cx="131.46" cy="652.42" r="0.75" fill="#a89e3a"/>
<circle cx="129.46" cy="656.16" r="0.75" fill="#a89e3a"/>
<circle cx="124.3" cy="651" r="5.3" fill="url(#knob2)"/>
<text x="188.7" y="666.9" font-size="8.1" fill="#cdbca2" textLength="9.2" lengthAdjust="spacingAndGlyphs" stroke="#cdbca2" stroke-width="0.25">file</text>
<circle cx="203.6" cy="664.9" r="2.3" fill="#d9c4a4"/>
<text x="166" y="676" font-size="8.1" fill="#3f94dc" textLength="32" lengthAdjust="spacingAndGlyphs" stroke="#3f94dc" stroke-width="0.3">bound_file</text>
<circle cx="203.6" cy="673.9" r="2.3" fill="#3ea6f2"/>
<rect x="172.05" y="683.30" width="1.1" height="2.5" rx="0.4" fill="#a6a6a6"/>
<rect x="182.50" y="683.10" width="2.2" height="2.2" rx="0.7" fill="#0c0c0c"/>
<rect x="193.90" y="683.20" width="2.2" height="1.3" rx="0.5" fill="#0c0c0c"/>
<path d="M0 596 H63.4 a4.8 4.8 0 0 1 4.8 4.8 V746 a4.8 4.8 0 0 1 -4.8 4.8 H0 Z" fill="#e4dd7a"/>
<path d="M0 610 H66.6 V749.2 H0 Z" fill="#c5be6b"/>
<path d="M0 596 H63.4 a4.8 4.8 0 0 1 4.8 4.8 V610 H0 Z" fill="#ece683"/>
<text x="0.8" y="626.6" font-size="10.8" fill="#1c1c1c">le</text>
<text x="-2.8" y="642.2" font-size="10.8" fill="#1c1c1c" textLength="59.6" lengthAdjust="spacingAndGlyphs" stroke="#1c1c1c" stroke-width="0.15">se backticks</text>
<text x="3.0" y="657.8" font-size="10.8" fill="#1c1c1c" textLength="47.4" lengthAdjust="spacingAndGlyphs" stroke="#1c1c1c" stroke-width="0.15">the frame</text>
</g>
</svg></body></html>
